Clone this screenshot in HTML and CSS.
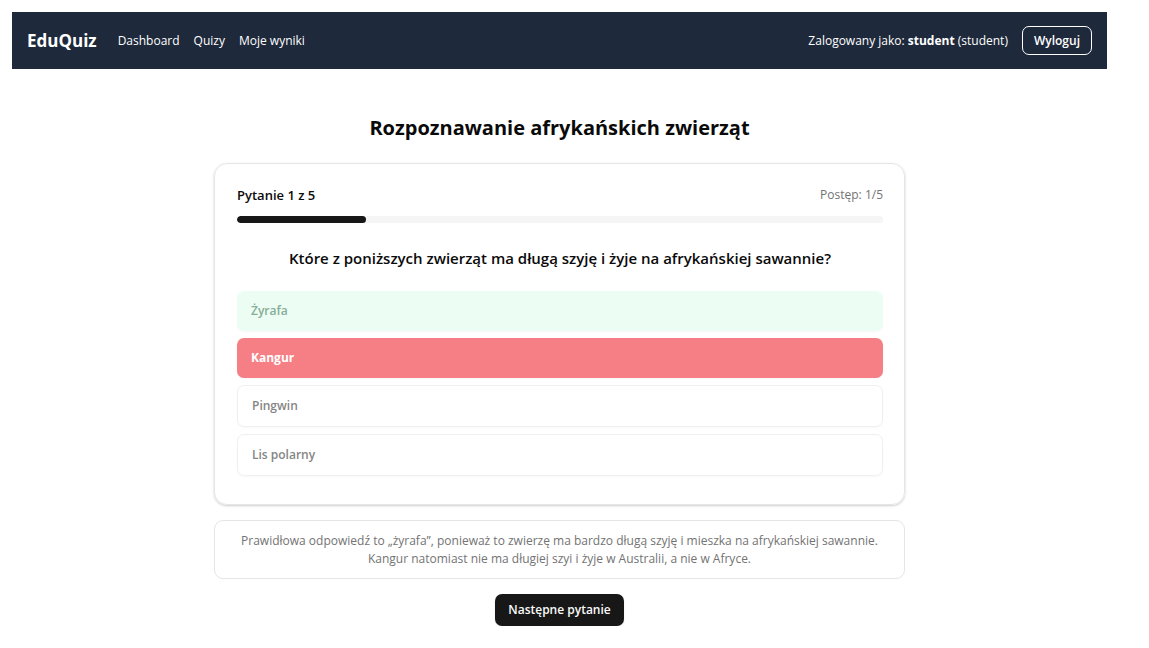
FILE: index.html
```html
<!DOCTYPE html>
<html lang="pl">
<head>
<meta charset="utf-8">
<meta name="viewport" content="width=device-width, initial-scale=1">
<title>EduQuiz</title>
<link rel="stylesheet" href="styles.css">
</head>
<body>
<div class="page">
  <header class="navbar">
    <a class="brand" href="#">EduQuiz</a>
    <nav class="nav-links">
      <a href="#">Dashboard</a>
      <a href="#">Quizy</a>
      <a href="#">Moje wyniki</a>
    </nav>
    <div class="session">
      <span>Zalogowany jako: <strong>student</strong> (student)</span>
      <button class="logout" type="button">Wyloguj</button>
    </div>
  </header>
  <main class="quiz">
    <h1 class="quiz-title">Rozpoznawanie afrykańskich zwierząt</h1>
    <section class="card">
      <div class="card-head">
        <span class="counter">Pytanie 1 z 5</span>
        <span class="step">Postęp: 1/5</span>
      </div>
      <div class="progress" role="progressbar" aria-valuemin="0" aria-valuemax="5" aria-valuenow="1" aria-label="Postęp">
        <div class="progress-fill" style="width: 20%"></div>
      </div>
      <h2 class="question">Które z poniższych zwierząt ma długą szyję i żyje na afrykańskiej sawannie?</h2>
      <div class="answers">
        <button class="answer correct" type="button" disabled>Żyrafa</button>
        <button class="answer wrong" type="button" disabled>Kangur</button>
        <button class="answer" type="button" disabled>Pingwin</button>
        <button class="answer" type="button" disabled>Lis polarny</button>
      </div>
    </section>
    <p class="explanation">Prawidłowa odpowiedź to „żyrafa”, ponieważ to zwierzę ma bardzo długą szyję i mieszka na afrykańskiej sawannie. Kangur natomiast nie ma długiej szyi i żyje w Australii, a nie w Afryce.</p>
    <button class="next" type="button">Następne pytanie</button>
  </main>
</div>
</body>
</html>
```
FILE: styles.css
```css
* {
  box-sizing: border-box;
}

body {
  margin: 0;
  background: #fff;
  color: #0a0a0a;
  font-family: "Open Sans", "Noto Sans", sans-serif;
  font-size: 12px;
  line-height: 18px;
}

button {
  font: inherit;
}

.page {
  padding: 12px 42px 0 12px;
}

.navbar {
  display: flex;
  align-items: center;
  padding: 14px 15px;
  background: #1e293b;
  color: #fff;
}

.navbar a {
  color: inherit;
  text-decoration: none;
}

.navbar .brand {
  margin-right: 21px;
  font-size: 17px;
  font-weight: 700;
}

.nav-links {
  display: flex;
  gap: 14px;
}

.session {
  display: flex;
  align-items: center;
  gap: 14px;
  margin-left: auto;
}

.logout {
  padding: 5px 11px 4px;
  border: 1px solid #fff;
  border-radius: 7px;
  background: transparent;
  color: #fff;
  font-weight: 600;
}

.quiz {
  display: flex;
  flex-direction: column;
  align-items: center;
  max-width: 691px;
  margin: 0 auto;
  padding-top: 44px;
}

.quiz-title {
  margin: 0 0 20px;
  font-size: 20px;
  font-weight: 700;
  line-height: 30px;
}

.card {
  width: 100%;
  padding: 22px 21px 28px 22px;
  border: 1px solid #e5e5e5;
  border-radius: 13px;
  box-shadow: 0 1px 3px rgba(0, 0, 0, 0.1), 0 1px 2px rgba(0, 0, 0, 0.1);
}

.card-head {
  display: flex;
  align-items: center;
  justify-content: space-between;
  margin-bottom: 12px;
}

.counter {
  font-size: 13px;
  font-weight: 600;
}

.step {
  color: #737373;
}

.progress {
  height: 7px;
  overflow: hidden;
  border-radius: 4px;
  background: #f5f5f5;
}

.progress-fill {
  height: 100%;
  border-radius: 4px;
  background: #171717;
}

.question {
  margin: 24px 0 21px;
  font-size: 15px;
  font-weight: 600;
  line-height: 23px;
  text-align: center;
}

.answers {
  display: flex;
  flex-direction: column;
  gap: 7px;
}

.answer {
  padding: 11px 14px;
  border: 1px solid #f0f0f0;
  border-radius: 7px;
  background: #fff;
  box-shadow: 0 1px 2px rgba(0, 0, 0, 0.03);
  color: #858585;
  font-weight: 600;
  text-align: left;
}

.answer.correct,
.answer.wrong {
  border: 0;
}

.answer.correct {
  background: #ecfdf3;
  color: #86ae98;
}

.answer.wrong {
  background: #f57f84;
  color: #fff;
  font-weight: 700;
}

.explanation {
  width: 100%;
  margin: 15px 0;
  padding: 11px 22px 10px;
  border: 1px solid #e5e5e5;
  border-radius: 9px;
  color: #737373;
  text-align: center;
}

.next {
  padding: 7px 13px;
  border: 0;
  border-radius: 7px;
  background: #171717;
  box-shadow: 0 1px 2px rgba(0, 0, 0, 0.1);
  color: #fafafa;
  font-weight: 600;
}
```
